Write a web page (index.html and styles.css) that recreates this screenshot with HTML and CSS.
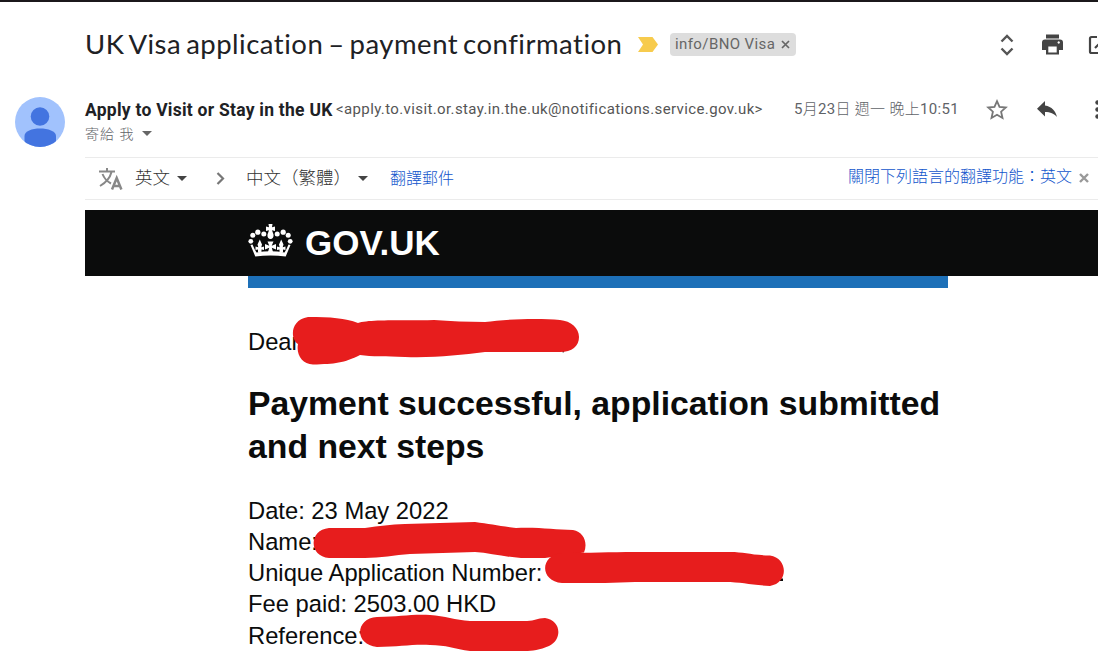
FILE: index.html
```html
<!DOCTYPE html>
<html lang="zh-Hant">
    <head>
        <meta charset="utf-8">
        <title>UK Visa application – payment confirmation</title>
        <link rel="stylesheet" href="styles.css">
    </head>
    <body>
      <main class="message">
        <header class="subject">
          <h1>UK Visa application – payment confirmation</h1>
          <svg class="important" width="20" height="15" viewBox="0 0 20 15"><path d="M0 0H14.5L20 7.5 14.5 15H0L5 7.5z"/></svg>
          <span class="label"><span class="label-name">info/BNO Visa</span><svg width="9" height="9" viewBox="0 0 9 9"><path d="M1 1L8 8M8 1L1 8"/></svg></span>
          <div class="subject-tools">
            <svg class="expand" width="14" height="22" viewBox="0 0 14 22"><path d="M1.5 7.5L7 2l5.500 5.500M1.500 14.500L7 20l5.500-5.500"/></svg>
            <svg class="print" width="21" height="21" viewBox="0 0 21 21"><path fill-rule="evenodd" d="M4 0.500H17V4.500H4zM3 5.500H18a3 3 0 0 1 3 3V16H17v4.500H4V16H0V8.500a3 3 0 0 1 3-3zM6.300 12.500V18.500H14.700V12.500zM16.700 7.300a1.200 1.200 0 1 0 .01 0z"/></svg>
            <svg class="popout" width="20" height="20" viewBox="0 0 20 20"><path d="M9 2H3.500Q2 2 2 3.500V16.500Q2 18 3.500 18H16.500Q18 18 18 16.500V11M12 2H18V8M18 2L7 13"/></svg>
          </div>
        </header>

        <section class="sender">
          <svg class="avatar" width="50" height="50" viewBox="0 0 50 50">
            <clipPath id="round"><circle cx="25" cy="25" r="25"/></clipPath>
            <circle cx="25" cy="25" r="25" fill="#a1c2fd"/>
            <g clip-path="url(#round)" fill="#4374e0">
              <circle cx="25" cy="19.500" r="9.300"/>
              <path d="M9.500 50V39C9.500 34 17 31.500 25 31.500S41 34 41 39V50z"/>
            </g>
          </svg>
          <div class="from">
            <div class="from-line">
              <span class="name">Apply to Visit or Stay in the UK</span>
              <span class="address">&lt;apply.to.visit.or.stay.in.the.uk@notifications.service.gov.uk&gt;</span>
            </div>
            <div class="to-line">寄給 我 <i class="caret"></i></div>
          </div>
          <time class="date">5月23日 週一 晚上10:51</time>
          <div class="sender-tools">
            <svg class="star" width="22" height="21" viewBox="0 0 22 21"><path d="M11 2.200L13.500 7.900 19.800 8.500 15.100 12.700 16.500 19 11 15.700 5.500 19 6.900 12.700 2.200 8.500 8.500 7.900z"/></svg>
            <svg class="reply" width="20" height="17" viewBox="0 0 20 17"><path d="M8 0V4.500C15 5.500 18.500 10 20 16 17 12.500 13.500 11 8 11V15.500L0 7.800z"/></svg>
            <svg class="more" width="5" height="19" viewBox="0 0 5 19"><circle cx="2.500" cy="2.500" r="2.200"/><circle cx="2.500" cy="9.500" r="2.200"/><circle cx="2.500" cy="16.500" r="2.200"/></svg>
          </div>
        </section>

        <section class="translate">
          <svg class="lang-icon" width="24" height="22" viewBox="0 0 24 22"><path d="M0 3.500H16M8 0V3.500M3.500 6C5.500 11 9 14 12 15.500M12.500 4C11 10 7 14.500 1 18"/><path class="letter" d="M13 21.500L17.700 10 22.400 21.500M14.500 18H21"/></svg>
          <span class="lang">英文</span><i class="caret dark"></i>
          <svg class="chevron" width="9" height="13" viewBox="0 0 9 13"><path d="M1.500 1L7 6.500 1.500 12"/></svg>
          <span class="lang">中文（繁體）</span><i class="caret dark"></i>
          <a class="do-translate">翻譯郵件</a>
          <a class="turn-off">關閉下列語言的翻譯功能：英文</a>
          <svg class="close" width="10" height="10" viewBox="0 0 10 10"><path d="M1 1L9 9M9 1L1 9"/></svg>
        </section>

        <article class="mail">
          <div class="banner">
            <svg class="crown" width="46" height="34" viewBox="0 0 46 34">
              <circle cx="2.800" cy="17.300" r="2.400"/><circle cx="4.800" cy="11.200" r="2.500"/><circle cx="9.800" cy="8.200" r="2.600"/><circle cx="15.800" cy="10" r="2.500"/>
              <circle cx="42.200" cy="17.300" r="2.400"/><circle cx="40.200" cy="11.200" r="2.500"/><circle cx="35.200" cy="8.200" r="2.600"/><circle cx="29.200" cy="10" r="2.500"/>
              <path d="M20.500 0H24.500L24 3.200 27 2.500V7L24 6.300 25.500 10.500C26 13 24.500 15 22.500 15S19 13 19.500 10.500L21 6.300 18 7V2.500L21 3.200z"/>
              <path d="M7.300 32.500L2.500 21 4.500 20.500 6.500 25 8.500 28.500Q22.500 26 36.500 28.500L38.500 25 40.500 20.500 42.500 21 37.700 32.500Q22.500 30.500 7.300 32.500z"/>
              <path d="M11.800 15.500L14 20.500 13.300 23.200 16 22.500V26L13.500 25.500 13.500 28.500H10L10 25.500 7.500 26V22.500L10.300 23.200 9.500 20.500z"/>
              <path d="M33.200 15.500L35.500 20.500 34.700 23.200 37.500 22.500V26L35 25.500 35 28.500H31.500L31.500 25.500 29 26V22.500L31.700 23.200 31 20.500z"/>
              <path d="M19.500 17.500H25.500L23.700 21.800 28 20V25.500L23.800 23.800 25 28H20L21.200 23.800 17 25.500V20L21.300 21.800z"/>
            </svg>
            <span class="gov">GOV.UK</span>
          </div>
          <div class="content">
            <p class="greeting">Dear</p>
            <h2>Payment successful, application submitted and next steps</h2>
            <p class="details">
              Date: 23 May 2022<br>
              Name:<br>
              Unique Application Number:<br>
              Fee paid: 2503.00 HKD<br>
              Reference:
            </p>
          </div>
        </article>

        <svg class="redactions" width="1098" height="660" viewBox="0 0 1098 660">
          <path class="speck" d="M562 350h3l-2 3zM780 578.500h3v2.500h-3z"/>
          <path d="M308 317C331 317 345 318 358 323C370 319 410 321 434 320C450 321 468 322 485 322C505 319 540 318 560 320C571 321 579 328 579 337C579 346 572 352 560 352H485C460 355 435 358 405 357C385 356 372 357 360 355C344 363 335 364 313 364.500C302 364 296 355 298 344C290 339 290 320 308 317z"/>
          <path d="M329 528H365C380 526 390 524.500 405 524L475 522C490 524 500 526 516 528C540 527 555 530 573 530C584 532 588 543 584 552.500L545 558H521C505 557 490 553 475 552L410 554C395 555 380 558 365 558H329C309 557 308 530 329 528z"/>
          <path d="M562 553C590 553 610 552 635 552H730C745 552 750 555 770 555.500C788 558 789 583 770 586C750 585 742 582 725 582H635L605 583H562C539 581 540 555 562 553z"/>
          <path d="M377 617C400 617 410 614 430 615C445 616 455 620 470 621H527C535 621 537 618 545 618C561 620 563 639 549 646C540 650 532 651 525 651H470C455 649 446 645 430 645C412 644 400 647 377 647C354 645 355 618 377 617z"/>
        </svg>
      </main>
    </body>
</html>
```

FILE: styles.css
```css
body {
  margin: 0;
  background: #fff;
  overflow: hidden;
  font-family: Roboto, "Noto Sans CJK TC", sans-serif;
  color: #202124;
}

svg { display: block; flex: none; }
h1, h2, p { margin: 0; }

.message {
  position: relative;
  box-sizing: border-box;
  height: 660px;
  border-top: 2px solid #1b181b;
  overflow: hidden;
}

/* subject */
.subject {
  display: flex;
  align-items: center;
  height: 85px;
  padding-left: 85px;
}
.subject h1 {
  flex: none;
  width: 537px;
  padding-bottom: 2px;
  font: 400 27.5px/36px Lato, sans-serif;
  letter-spacing: 0.5px;
  word-spacing: -2.6px;
  white-space: nowrap;
}
.important { margin-left: 16px; fill: #f7cb4d; }
.label {
  display: flex;
  align-items: center;
  flex: none;
  box-sizing: border-box;
  width: 126px;
  height: 23px;
  margin-left: 12px;
  padding: 0 6px 0 5px;
  justify-content: space-between;
  border-radius: 4px;
  background: #ddd;
  color: #666;
  font-size: 15px;
  letter-spacing: 0.4px;
}
.label-name { padding-bottom: 2px; }
.label svg { fill: none; stroke: #666; stroke-width: 1.7; }
.subject-tools { display: flex; align-items: center; margin-left: 204px; fill: #444; }
.expand { fill: none; stroke: #555; stroke-width: 2.4; }
.print { margin-left: 28px; }
.popout { margin-left: 25px; fill: none; stroke: #444; stroke-width: 2.2; }

/* sender */
.sender { display: flex; height: 70px; padding-left: 15px; }
.avatar { margin-top: 10px; }
.from { flex: none; width: 709px; margin-left: 20px; padding-top: 11px; }
.from-line { display: flex; align-items: center; height: 22px; white-space: nowrap; }
.name { width: 248px; padding-top: 2px; font-size: 17.5px; font-weight: 700; letter-spacing: 0.25px; }
.address { margin-left: 3px; color: #555; font-size: 15px; letter-spacing: 0.38px; }
.to-line { display: flex; align-items: center; height: 26px; color: #5f6368; font-size: 14px; font-weight: 300; letter-spacing: 1px; }
.date { flex: none; width: 166px; margin-top: 11px; color: #5f6368; font-size: 15px; line-height: 22px; letter-spacing: 0.3px; white-space: nowrap; font-family: Roboto, "Noto Sans CJK TC Light", "Noto Sans CJK TC", sans-serif; }
.sender-tools { display: flex; align-items: center; height: 22px; margin: 11px 0 0 26px; }
.star { fill: none; stroke: #777; stroke-width: 1.8; }
.reply { margin-left: 29px; fill: #444; }
.more { margin-left: 38px; fill: #444; }

.caret {
  flex: none;
  margin-left: 8px;
  border: 5px solid transparent;
  border-top-color: #666;
  border-bottom-width: 0;
}
.caret.dark { margin-left: 7px; border-top-color: #444; }

/* translation bar */
.translate {
  display: flex;
  align-items: center;
  box-sizing: border-box;
  height: 43px;
  margin-left: 85px;
  padding-left: 14px;
  border: solid #ebebeb;
  border-width: 1px 0;
  white-space: nowrap;
}
.lang-icon { fill: none; stroke: #888; stroke-width: 2; }
.lang-icon .letter { stroke-width: 2.5; }
.lang { margin-left: 12px; padding-bottom: 4px; color: #333; font-size: 17.5px; font-weight: 300; }
.chevron { margin: 0 9px 0 29px; fill: none; stroke: #777; stroke-width: 2.2; }
.translate a { color: #15c; font-size: 16px; font-weight: 300; line-height: 24px; }
.do-translate { margin-left: 22px; }
.turn-off { margin: 0 7px 4px auto; }
.close { margin: -1px 9px 0 0; fill: none; stroke: #999; stroke-width: 2.4; }

/* mail body */
.mail {
  margin: 10px 0 0 85px;
  color: #0b0c0c;
  font-family: "Liberation Sans", Arial, sans-serif;
}
.banner {
  display: flex;
  align-items: center;
  height: 66px;
  padding-left: 163px;
  background: #0b0c0c;
  color: #fff;
}
.crown { margin-top: -4px; fill: #fff; }
.gov { margin-left: 11px; font-size: 35px; font-weight: 700; }
.content {
  width: 700px;
  margin-left: 163px;
  border-top: 12px solid #1d70b8;
  font-size: 23.75px;
  line-height: 31.25px;
}
.greeting { padding-top: 38px; }
.content h2 { margin: 24.3px 0 25.5px; font-size: 33.75px; line-height: 43.75px; }

/* marker strokes */
.redactions { position: absolute; left: 0; top: -2px; fill: #e71d1d; }
.speck { fill: #0b0c0c; }
```
